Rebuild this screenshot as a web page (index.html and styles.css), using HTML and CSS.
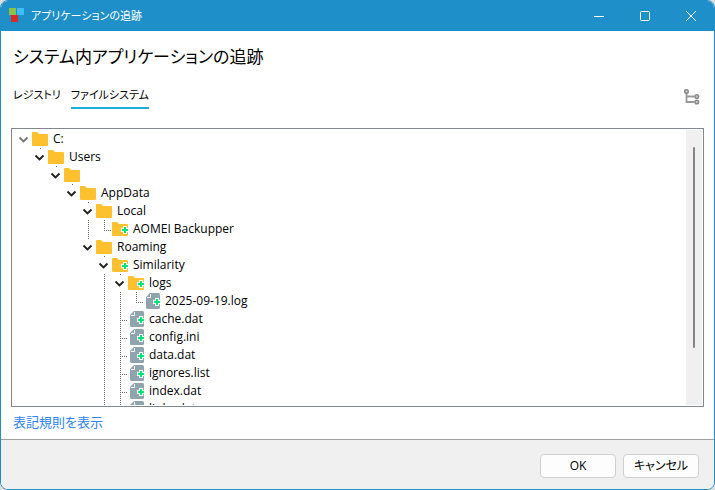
FILE: index.html
```html
<!DOCTYPE html>
<html lang="ja">
<head>
<meta charset="utf-8">
<title>アプリケーションの追跡</title>
<link rel="stylesheet" href="styles.css">
</head>
<body>
<svg class="defs" aria-hidden="true">
  <symbol id="folder" viewBox="0 0 16 16"><path d="M0 2Q0 1 1 1H5l2 2h8q1 0 1 1V14q0 1-1 1H1q-1 0-1-1z" fill="#fdc02f"/></symbol>
  <symbol id="plus" viewBox="0 0 16 16"><path d="M11 5h4v2h2v4h-2v2h-4v-2H9V7h2z" fill="#fff"/><path d="M12 6h2v2h2v2h-2v2h-2v-2h-2V8h2z" fill="#00e676"/></symbol>
  <symbol id="file" viewBox="0 0 16 16"><path d="M6 0h8.500Q16 0 16 1.500v13q0 1.500-1.500 1.500h-11Q2 16 2 14.500V4z" fill="#90a4ae"/><path d="M6.500 1v3.500H3" fill="none" stroke="#fff"/></symbol>
  <symbol id="chevron" viewBox="0 0 16 16"><path d="M3.500 5.500l4 4 4-4" fill="none" stroke="currentColor" stroke-width="1.900"/></symbol>
</svg>
<div class="window">
  <header class="titlebar">
    <svg class="logo" viewBox="0 0 16 16" aria-hidden="true"><path d="M0 0h7v7H0z" fill="#8bc34a"/><path d="M8 0h7v7H8z" fill="#40bdf8"/><path d="M2 7h7v7H2z" fill="#d92b20"/></svg>
    <span class="caption">アプリケーションの追跡</span>
    <button class="winbtn" aria-label="最小化"><svg viewBox="0 0 12 12"><path d="M1 6.500h10"/></svg></button>
    <button class="winbtn" aria-label="最大化"><svg viewBox="0 0 12 12"><rect x="1.500" y="1.500" width="9" height="9" rx="1"/></svg></button>
    <button class="winbtn" aria-label="閉じる"><svg viewBox="0 0 12 12"><path d="M1 1l10 10M11 1L1 11"/></svg></button>
  </header>
  <main class="content">
    <h1>システム内アプリケーションの追跡</h1>
    <div class="toolbar">
      <nav class="tabs">
        <button class="tab">レジストリ</button>
        <button class="tab active">ファイルシステム</button>
      </nav>
      <button class="treebtn" aria-label="ツリー表示"><svg viewBox="0 0 16 16"><path d="M2.500 4v9h8M2.500 7.500h8" fill="none" stroke="#999" stroke-width="1.800"/><g fill="#ccc" stroke="#8c8c8c" stroke-width="1.500"><circle cx="2.500" cy="2.500" r="1.800"/><circle cx="12.800" cy="7.500" r="1.800"/><circle cx="12.800" cy="13" r="1.800"/></g></svg></button>
    </div>
    <div class="treebox">
      <ul class="tree root">
        <li><div class="row"><span class="toggle dim"><svg><use href="#chevron"/></svg></span><svg><use href="#folder"/></svg><span>C:</span></div>
        <ul class="tree"><li><div class="row"><span class="toggle"><svg><use href="#chevron"/></svg></span><svg><use href="#folder"/></svg><span>Users</span></div>
        <ul class="tree"><li><div class="row"><span class="toggle"><svg><use href="#chevron"/></svg></span><svg><use href="#folder"/></svg></div>
        <ul class="tree"><li><div class="row"><span class="toggle"><svg><use href="#chevron"/></svg></span><svg><use href="#folder"/></svg><span>AppData</span></div>
        <ul class="tree">
          <li><div class="row"><span class="toggle"><svg><use href="#chevron"/></svg></span><svg><use href="#folder"/></svg><span>Local</span></div>
            <ul class="tree"><li><div class="row"><span class="branch"></span><svg><use href="#folder"/><use href="#plus"/></svg><span>AOMEI Backupper</span></div></li></ul>
          </li>
          <li><div class="row"><span class="toggle"><svg><use href="#chevron"/></svg></span><svg><use href="#folder"/></svg><span>Roaming</span></div>
            <ul class="tree">
              <li class="more"><div class="row"><span class="toggle"><svg><use href="#chevron"/></svg></span><svg><use href="#folder"/><use href="#plus"/></svg><span>Similarity</span></div>
                <ul class="tree">
                  <li><div class="row"><span class="toggle"><svg><use href="#chevron"/></svg></span><svg><use href="#folder"/><use href="#plus"/></svg><span>logs</span></div>
                    <ul class="tree"><li><div class="row"><span class="branch"></span><svg><use href="#file"/><use href="#plus"/></svg><span>2025-09-19.log</span></div></li></ul>
                  </li>
                  <li><div class="row"><span class="branch"></span><svg><use href="#file"/><use href="#plus"/></svg><span>cache.dat</span></div></li>
                  <li><div class="row"><span class="branch"></span><svg><use href="#file"/><use href="#plus"/></svg><span>config.ini</span></div></li>
                  <li><div class="row"><span class="branch"></span><svg><use href="#file"/><use href="#plus"/></svg><span>data.dat</span></div></li>
                  <li><div class="row"><span class="branch"></span><svg><use href="#file"/><use href="#plus"/></svg><span>ignores.list</span></div></li>
                  <li><div class="row"><span class="branch"></span><svg><use href="#file"/><use href="#plus"/></svg><span>index.dat</span></div></li>
                  <li class="more"><div class="row"><span class="branch"></span><svg><use href="#file"/><use href="#plus"/></svg><span>links.dat</span></div></li>
                </ul>
              </li>
            </ul>
          </li>
        </ul></li></ul></li></ul></li></ul></li>
      </ul>
      <div class="scrollbar"><div class="thumb"></div></div>
    </div>
    <a class="legend" href="#legend">表記規則を表示</a>
  </main>
  <footer class="footer">
    <button class="btn">OK</button>
    <button class="btn">キャンセル</button>
  </footer>
</div>
</body>
</html>
```
FILE: styles.css
```css
* { box-sizing: border-box; }
body {
  margin: 0;
  background: #ddd;
  color: #000;
  font: 12px/18px "Open Sans", "Noto Sans CJK JP", sans-serif;
  font-feature-settings: "palt";
}
button { font: inherit; font-feature-settings: inherit; color: inherit; border: 0; padding: 0; background: none; }
.defs { position: absolute; width: 0; height: 0; }
.window {
  display: flex;
  flex-direction: column;
  height: 100vh;
  border: 1px solid #1e8fc9;
  border-radius: 8px;
  background: #fff;
  overflow: hidden;
}
.titlebar { display: flex; align-items: center; height: 30px; flex: none; padding-left: 8px; background: #1e8fc9; color: #fff; }
.logo { width: 16px; height: 16px; margin-right: 6px; }
.caption { flex: 1; font-size: 11px; }
.winbtn { width: 46px; height: 30px; display: flex; align-items: center; justify-content: center; }
.winbtn svg { width: 12px; height: 12px; fill: none; stroke: #fff; }
.content { flex: 1; min-height: 0; display: flex; flex-direction: column; padding: 12px 10px 8px; }
h1 { margin: 0 2px; font-size: 17px; line-height: 28px; font-weight: 400; }
.toolbar { display: flex; justify-content: space-between; align-items: center; margin: 14px 2px 19px; padding-right: 2px; }
.tabs { display: flex; gap: 10px; }
.tab { height: 24px; padding-bottom: 2px; border-bottom: 2px solid transparent; font-size: 11px; }
.tab.active { border-color: #1eabe0; }
.treebtn svg { display: block; width: 16px; height: 16px; }
.treebox { flex: 1; min-height: 0; display: flex; padding: 1px; border: 1px solid #828790; }
.tree { list-style: none; margin: 0; padding: 0 0 0 16px; }
.tree.root { flex: 1; padding-left: 3px; overflow: hidden; }
.tree li {
  background: repeating-linear-gradient(#666 0 1px, transparent 1px 2px) 8px 0 / 1px 100% no-repeat;
}
.tree li:last-child { background-size: 1px 10px; }
.tree li.more { background-size: 1px 100%; }
.root > li:last-child { background: none; }
.row { display: flex; height: 18px; align-items: center; white-space: nowrap; }
.row svg { width: 16px; height: 16px; flex: none; }
.row > span:last-child { margin-left: 5px; }
.toggle { display: flex; width: 16px; height: 16px; align-self: flex-end; background: #fff; color: #222; }
.dim { color: #777; }
.branch { width: 16px; height: 18px; background: repeating-linear-gradient(90deg, #666 0 1px, transparent 1px 2px) 8px 10px / 8px 1px no-repeat; }
.scrollbar { width: 16px; background: #f0f0f0; padding-top: 17px; }
.thumb { width: 2px; height: 78%; margin: 0 auto; border-radius: 1px; background: #858585; }
.legend { align-self: flex-start; margin: 6px 2px 0; font-size: 13px; color: #2b83f6; text-decoration: none; }
.footer { flex: none; display: flex; justify-content: flex-end; gap: 7px; padding: 14px 15px 11px; border-top: 1px solid #a0a0a0; background: #f0f0f0; }
.btn { width: 76px; height: 24px; border: 1px solid #d0d0d0; border-radius: 4px; background: #fdfdfd; }
```
